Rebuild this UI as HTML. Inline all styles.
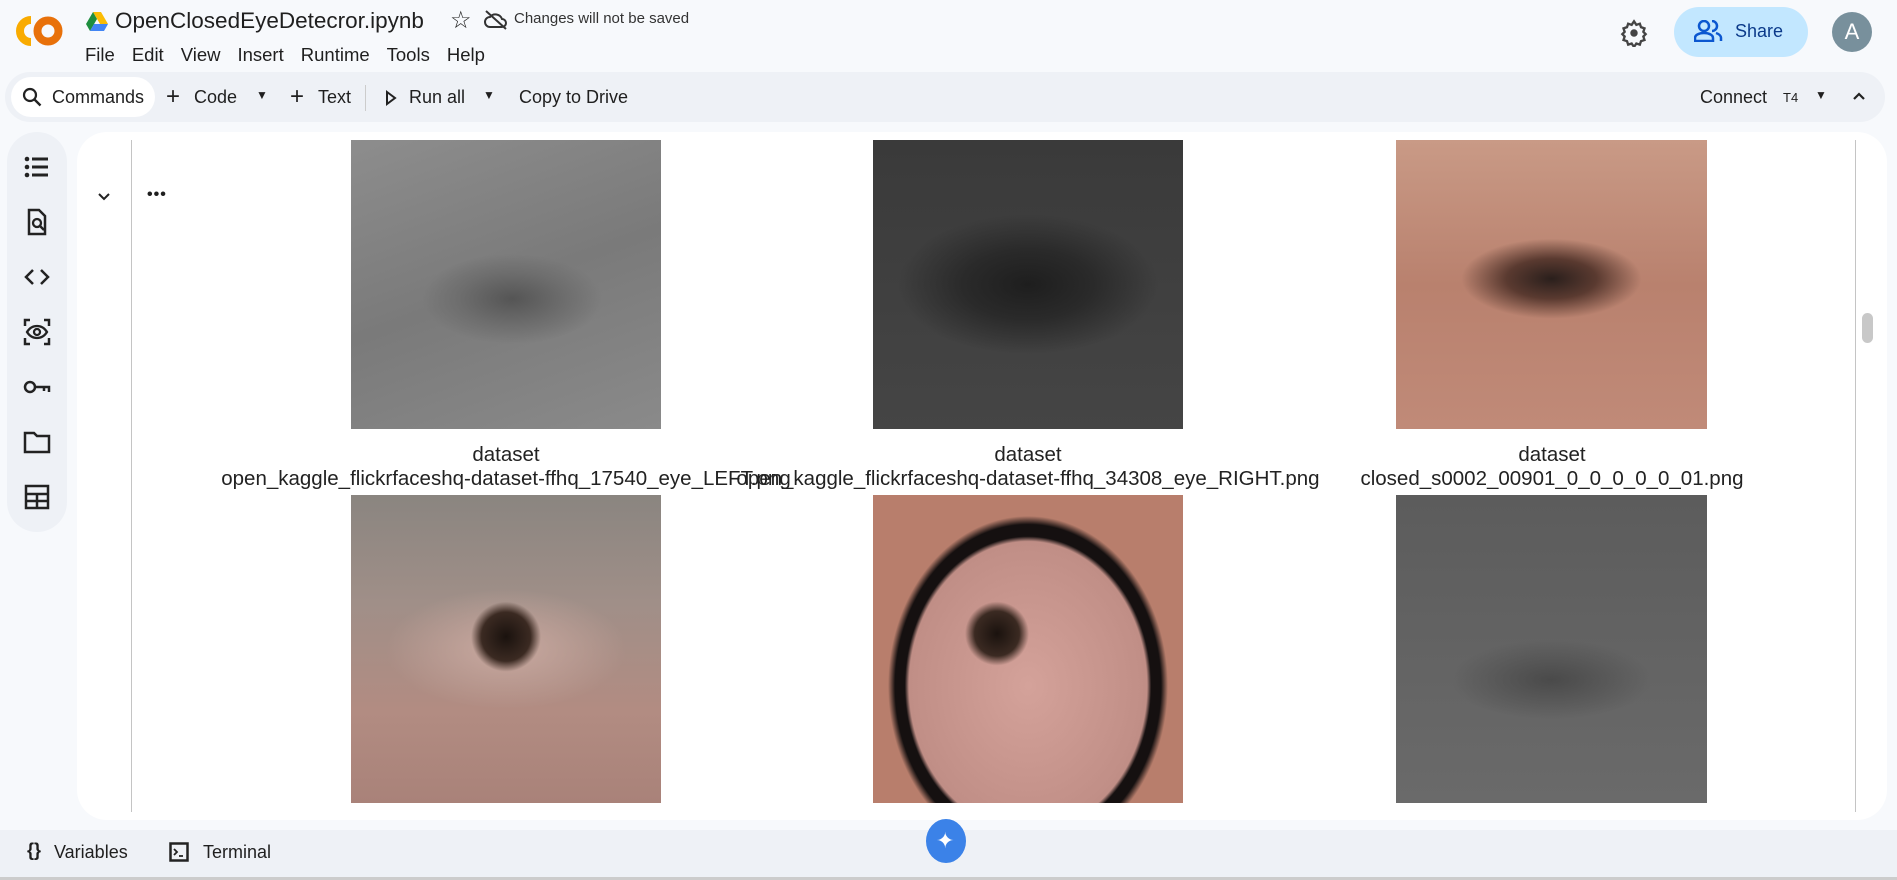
<!DOCTYPE html>
<html><head><meta charset="utf-8"><style>
*{margin:0;padding:0;box-sizing:border-box}
body{width:1897px;height:880px;background:#f7f9fc;font-family:"Liberation Sans",sans-serif;color:#1f1f1f;position:relative;overflow:hidden}
.a{position:absolute}
.menu span{margin-right:17px}
.tb{font-size:18px;color:#1f1f1f}
.lbl{font-size:20.5px;text-align:center;width:640px;line-height:24px;color:#222}
.ic{position:absolute;left:22px;width:30px;height:30px}
</style></head><body>
<!-- logo -->
<svg class="a" style="left:12px;top:14px" width="52" height="34" viewBox="0 0 52 34"><path d="M19 6a11 11 0 1 0 0 22" stroke="#f9ab00" stroke-width="8" fill="none"/><circle cx="36" cy="17" r="10.5" stroke="#e8710a" stroke-width="8" fill="none"/></svg>
<svg class="a" style="left:86px;top:12px" width="22" height="20" viewBox="0 0 22 20"><path d="M7 0h8l7 12h-8z" fill="#fbbc04"/><path d="M7 0l-7 12 4 7 7-12z" fill="#1e8e3e"/><path d="M4 19h14l4-7H8z" fill="#4285f4"/></svg>
<div class="a" style="left:115px;top:8px;font-size:22.5px">OpenClosedEyeDetecror.ipynb</div>
<div class="a" style="left:450px;top:6px;font-size:24px">☆</div>
<svg class="a" style="left:484px;top:9px" width="24" height="22" viewBox="0 0 24 22"><path d="M6 18h12a4 4 0 0 0 0-8 7 7 0 0 0-12-2A5 5 0 0 0 6 18z" fill="none" stroke="#333" stroke-width="2"/><path d="M2 2l20 18" stroke="#333" stroke-width="2"/></svg>
<div class="a" style="left:514px;top:10px;font-size:15px;color:#333">Changes will not be saved</div>
<div class="a menu" style="left:85px;top:44px;font-size:18.5px"><span>File</span><span>Edit</span><span>View</span><span>Insert</span><span>Runtime</span><span>Tools</span><span>Help</span></div>
<svg class="a" style="left:1620px;top:19px" width="28" height="28" viewBox="0 0 24 24"><circle cx="12" cy="12" r="3.2" fill="#444"/><path d="M12 2l2 3 3-1 1 3 3 1-1 3 2 2-2 2 1 3-3 1-1 3-3-1-2 3-2-3-3 1-1-3-3-1 1-3-2-2 2-2-1-3 3-1 1-3 3 1z" fill="none" stroke="#444" stroke-width="2"/></svg>
<div class="a" style="left:1674px;top:7px;width:134px;height:50px;border-radius:25px;background:#c2e7ff"></div>
<svg class="a" style="left:1694px;top:20px" width="30" height="22" viewBox="0 0 30 22"><circle cx="10" cy="6" r="5" fill="none" stroke="#0b57d0" stroke-width="2.5"/><path d="M1 21v-3c0-3 4-5 9-5s9 2 9 5v3z" fill="none" stroke="#0b57d0" stroke-width="2.5"/><path d="M18 1a5 5 0 0 1 0 10M22 13c3 1 5 3 5 5v3" fill="none" stroke="#0b57d0" stroke-width="2.5"/></svg>
<div class="a" style="left:1735px;top:21px;font-size:18px;color:#0b3a8a">Share</div>
<div class="a" style="left:1832px;top:12px;width:40px;height:40px;border-radius:50%;background:#78909c;color:#fff;font-size:22px;text-align:center;line-height:40px">A</div>
<!-- toolbar -->
<div class="a" style="left:5px;top:72px;width:1880px;height:50px;border-radius:25px;background:#eef1f6"></div>
<div class="a" style="left:11px;top:77px;width:144px;height:40px;border-radius:20px;background:#fff"></div>
<svg class="a" style="left:22px;top:87px" width="20" height="20" viewBox="0 0 20 20"><circle cx="8" cy="8" r="6" fill="none" stroke="#222" stroke-width="2.2"/><path d="M12.5 12.5l6 6" stroke="#222" stroke-width="2.4"/></svg>
<div class="a tb" style="left:52px;top:87px">Commands</div>
<div class="a tb" style="left:166px;top:83px;font-size:24px">+</div>
<div class="a tb" style="left:194px;top:87px">Code</div>
<div class="a tb" style="left:256px;top:88px;font-size:12px">▼</div>
<div class="a tb" style="left:290px;top:83px;font-size:24px">+</div>
<div class="a tb" style="left:318px;top:87px">Text</div>
<div class="a" style="left:365px;top:85px;width:1px;height:26px;background:#ccc"></div>
<svg class="a" style="left:385px;top:90px" width="12" height="16" viewBox="0 0 12 16"><path d="M2 2l8 6-8 6z" fill="none" stroke="#222" stroke-width="2"/></svg>
<div class="a tb" style="left:409px;top:87px">Run all</div>
<div class="a tb" style="left:483px;top:88px;font-size:12px">▼</div>
<div class="a tb" style="left:519px;top:87px">Copy to Drive</div>
<div class="a tb" style="left:1700px;top:87px">Connect</div>
<div class="a" style="left:1783px;top:90px;font-size:13px">T4</div>
<div class="a tb" style="left:1815px;top:88px;font-size:12px">▼</div>
<svg class="a" style="left:1852px;top:91px" width="14" height="10" viewBox="0 0 14 10"><path d="M2 8l5-5 5 5" fill="none" stroke="#222" stroke-width="2.2"/></svg>
<!-- sidebar -->
<div class="a" style="left:7px;top:132px;width:60px;height:400px;border-radius:30px;background:#eef1f6"></div>
<svg class="ic" style="top:152px" viewBox="0 0 30 30"><g fill="#222"><circle cx="5" cy="7" r="2.3"/><circle cx="5" cy="15" r="2.3"/><circle cx="5" cy="23" r="2.3"/><rect x="10" y="5.5" width="16" height="3"/><rect x="10" y="13.5" width="16" height="3"/><rect x="10" y="21.5" width="16" height="3"/></g></svg>
<svg class="ic" style="top:207px" viewBox="0 0 30 30"><path d="M7 3h10l6 6v18H7z" fill="none" stroke="#222" stroke-width="2.5"/><circle cx="15" cy="16" r="4" fill="none" stroke="#222" stroke-width="2.3"/><path d="M18 19l4 4" stroke="#222" stroke-width="2.5"/></svg>
<svg class="ic" style="top:262px" viewBox="0 0 30 30"><path d="M11 8l-7 7 7 7M19 8l7 7-7 7" fill="none" stroke="#222" stroke-width="2.5"/></svg>
<svg class="ic" style="top:317px" viewBox="0 0 30 30"><path d="M3 9V3h5M22 3h5v6M27 21v6h-5M8 27H3v-6" fill="none" stroke="#222" stroke-width="2.5"/><path d="M5 15c5-8 15-8 20 0-5 8-15 8-20 0z" fill="none" stroke="#222" stroke-width="2.3"/><circle cx="15" cy="15" r="3" fill="none" stroke="#222" stroke-width="2.3"/></svg>
<svg class="ic" style="top:372px" viewBox="0 0 30 30"><circle cx="8" cy="15" r="5" fill="none" stroke="#222" stroke-width="2.5"/><path d="M13 15h14v5M22 15v4" fill="none" stroke="#222" stroke-width="2.5"/></svg>
<svg class="ic" style="top:427px" viewBox="0 0 30 30"><path d="M3 6h9l3 3h12v16H3z" fill="none" stroke="#222" stroke-width="2.5"/></svg>
<svg class="ic" style="top:482px" viewBox="0 0 30 30"><path d="M4 4h22v22H4zM4 12h22M15 12v14M4 19h22" fill="none" stroke="#222" stroke-width="2.5"/></svg>
<!-- main panel -->
<div class="a" style="left:77px;top:132px;width:1810px;height:688px;border-radius:30px;background:#fff"></div>
<div class="a" style="left:131px;top:140px;width:1px;height:672px;background:#c4c4c4"></div>
<div class="a" style="left:1855px;top:140px;width:1px;height:672px;background:#c4c4c4"></div>
<div class="a" style="left:1862px;top:313px;width:11px;height:30px;border-radius:6px;background:#c8c8c8"></div>
<svg class="a" style="left:97px;top:192px" width="14" height="10" viewBox="0 0 14 10"><path d="M2 2l5 5 5-5" fill="none" stroke="#222" stroke-width="2"/></svg>
<div class="a" style="left:147px;top:186px;font-size:16px;font-weight:bold;letter-spacing:1px">•••</div>
<!-- images row1 -->
<div class="a" style="left:351px;top:140px;width:310px;height:289px;background:radial-gradient(ellipse 90px 45px at 52% 55%,#555 0%,#6e6e6e 60%,transparent 100%),linear-gradient(160deg,#8d8d8d,#7a7a7a 50%,#8a8a8a)"></div>
<div class="a" style="left:873px;top:140px;width:310px;height:289px;background:radial-gradient(ellipse 130px 70px at 50% 50%,#1e1e1e 0%,#2a2a2a 50%,transparent 100%),linear-gradient(#3a3a3a,#454545)"></div>
<div class="a" style="left:1396px;top:140px;width:311px;height:289px;background:radial-gradient(ellipse 90px 40px at 50% 48%,#2a1f1c 0%,#5a3a30 50%,transparent 100%),linear-gradient(#c99a86,#b9816e 50%,#c08a78)"></div>
<div class="a lbl" style="left:186px;top:443px">dataset<br>open_kaggle_flickrfaceshq-dataset-ffhq_17540_eye_LEFT.png</div>
<div class="a lbl" style="left:708px;top:443px">dataset<br>open_kaggle_flickrfaceshq-dataset-ffhq_34308_eye_RIGHT.png</div>
<div class="a lbl" style="left:1232px;top:443px">dataset<br>closed_s0002_00901_0_0_0_0_0_01.png</div>
<!-- row2 -->
<div class="a" style="left:351px;top:495px;width:310px;height:308px;background:radial-gradient(circle 35px at 50% 46%,#1a120e 0%,#3b2a22 70%,transparent 100%),radial-gradient(ellipse 120px 60px at 50% 50%,#c9a9a0 0%,transparent 100%),linear-gradient(#8a8580,#a08f88 35%,#b28c82 70%,#a98279)"></div>
<div class="a" style="left:873px;top:495px;width:310px;height:308px;background:radial-gradient(circle 32px at 40% 45%,#1a120e 0%,#3b2a22 70%,transparent 100%),radial-gradient(ellipse 140px 170px at 50% 62%,#d4a29a 0%,#c08e86 85%,#151010 88%,#151010 95%,#b87e6c 100%),linear-gradient(#c89680,#b67a64)"></div>
<div class="a" style="left:1396px;top:495px;width:311px;height:308px;background:radial-gradient(ellipse 100px 40px at 50% 60%,#4a4a4a 0%,transparent 100%),linear-gradient(#5c5c5c,#6a6a6a)"></div>
<!-- bottom bar -->
<div class="a" style="left:0;top:830px;width:1897px;height:47px;background:#eef1f6"></div>
<div class="a" style="left:0;top:877px;width:1897px;height:3px;background:#ccc"></div>
<div class="a" style="left:27px;top:840px;font-size:18px;font-weight:bold">{}</div>
<div class="a" style="left:54px;top:842px;font-size:18px">Variables</div>
<svg class="a" style="left:169px;top:842px" width="20" height="20" viewBox="0 0 20 20"><rect x="1.5" y="1.5" width="17" height="17" fill="none" stroke="#222" stroke-width="2.5"/><path d="M5 7l3 3-3 3M10 14h4" fill="none" stroke="#222" stroke-width="1.8"/></svg>
<div class="a" style="left:203px;top:842px;font-size:18px">Terminal</div>
<div class="a" style="left:926px;top:819px;width:40px;height:44px;border-radius:50%;background:#3b82e8"></div>
<div class="a" style="left:936px;top:828px;color:#fff;font-size:22px">✦</div>
</body></html>
